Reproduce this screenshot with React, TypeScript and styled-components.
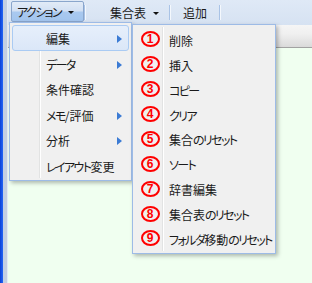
import React from "react";
import styled, { createGlobalStyle } from "styled-components";

const GlobalStyle = createGlobalStyle`
  html, body {
    margin: 0;
    padding: 0;
    background: #f0fff0;
  }
  body {
    font-family: "Noto Sans CJK JP", "Noto Sans", sans-serif;
    font-size: 12px;
    color: #1a1a1a;
  }
`;

const Frame = styled.div`
  position: relative;
  width: 312px;
  height: 283px;
  display: flex;
  overflow: hidden;
  font-feature-settings: "palt";
`;

const BlueEdge = styled.div`
  width: 3px;
  background: linear-gradient(to right, #0a40d6, #2466f6);
`;

const SideStrip = styled.div`
  width: 4px;
  background: #c3cfe2;
  border-right: 1px solid #e4ebf5;
`;

const Main = styled.div`
  flex: 1;
  display: flex;
  flex-direction: column;
`;

const Toolbar = styled.div`
  height: 25px;
  display: flex;
  align-items: center;
  padding-left: 3px;
  background: linear-gradient(#dfe9f6, #d6e2f2);
`;

const ToolButton = styled.div<{ $pressed?: boolean; $pad: string }>`
  height: 21px;
  box-sizing: border-box;
  display: flex;
  align-items: center;
  padding: ${(p) => p.$pad};
  border-radius: 2px;
  border: 1px solid ${(p) => (p.$pressed ? "#8aa6cc" : "transparent")};
  background: ${(p) =>
    p.$pressed
      ? "linear-gradient(#e2ebf7 0%, #d2e0f3 48%, #a9c9ef 52%, #a3c5ee 100%)"
      : "transparent"};
  margin-top: ${(p) => (p.$pressed ? "-2px" : "0")};
  line-height: 1;
  white-space: nowrap;
`;

const Caret = styled.span`
  width: 0;
  height: 0;
  margin-left: 7px;
  margin-top: 1px;
  border-left: 3px solid transparent;
  border-right: 3px solid transparent;
  border-top: 3px solid #111;
`;

const Sep = styled.div`
  width: 1px;
  height: 15px;
  background: #a9c3e6;
  border-right: 1px solid #f4f8fd;
`;

const HeaderBand = styled.div`
  height: 22px;
  background: linear-gradient(#f5f5f5, #f0f0f0 40%, #dadada);
  border-bottom: 1px solid #a2a2a2;
`;

const Content = styled.div`
  flex: 1;
  background: #f0fff0;
`;

const Menu = styled.div<{ $left: number; $top: number; $width: number }>`
  position: absolute;
  left: ${(p) => p.$left}px;
  top: ${(p) => p.$top}px;
  width: ${(p) => p.$width}px;
  box-sizing: border-box;
  padding: 2px;
  background: #f0f0f0;
  border: 1px solid #9dbbe6;
  box-shadow: 2px 2px 4px rgba(0, 0, 0, 0.28);
  display: flex;
  flex-direction: column;
`;

const Gutter = styled.div`
  position: absolute;
  left: 29px;
  top: 2px;
  bottom: 2px;
  width: 1px;
  background: #e2e3e3;
  border-right: 1px solid #ffffff;
`;

const Item = styled.div<{ $h: number; $active?: boolean }>`
  position: relative;
  height: ${(p) => p.$h}px;
  box-sizing: border-box;
  display: flex;
  align-items: center;
  padding-top: 3px;
  border-radius: 3px;
  border: 1px solid ${(p) => (p.$active ? "#aacbf3" : "transparent")};
  background: ${(p) =>
    p.$active ? "linear-gradient(#e6effb, #dbe7f8)" : "transparent"};
  white-space: nowrap;
`;

const IconCell = styled.div`
  width: 27px;
  flex-shrink: 0;
  display: flex;
  justify-content: center;
  align-items: center;
`;

const Label = styled.span`
  flex: 1;
  padding-left: 6px;
  line-height: 1;
`;

const Kana = styled.span`
  letter-spacing: -1.6px;
`;

const Arrow = styled.span`
  width: 0;
  height: 0;
  margin-right: 6px;
  border-top: 4px solid transparent;
  border-bottom: 4px solid transparent;
  border-left: 5px solid #3b7bd4;
`;

// red ring with the step number, as in the circled-digit glyphs
const Circled = styled.span`
  width: 19px;
  height: 16px;
  flex-shrink: 0;
  box-sizing: border-box;
  margin-top: -3px;
  margin-left: 1px;
  border: 2px solid #ff0000;
  border-radius: 50%;
  display: flex;
  align-items: center;
  justify-content: center;
  color: #ff0000;
  font-family: "Liberation Sans", Arial, sans-serif;
  font-weight: 700;
  font-size: 12px;
  line-height: 1;
`;

// MS UI Gothic draws kana narrower than kanji; tighten kana runs
const Jp = ({ text }: { text: string }) => (
  <>
    {text.split(/([\u3040-\u30ff]+)/).map((part, i) =>
      /^[\u3040-\u30ff]+$/.test(part) ? <Kana key={i}>{part}</Kana> : part
    )}
  </>
);

type MainItem = { label: string; sub?: boolean; active?: boolean };

const mainItems: MainItem[] = [
  { label: "編集", sub: true, active: true },
  { label: "データ", sub: true },
  { label: "条件確認" },
  { label: "メモ/評価", sub: true },
  { label: "分析", sub: true },
  { label: "レイアウト変更" },
];

const subItems = [
  "削除",
  "挿入",
  "コピー",
  "クリア",
  "集合のリセット",
  "ソート",
  "辞書編集",
  "集合表のリセット",
  "フォルダ移動のリセット",
];

export default function App() {
  return (
    <>
      <GlobalStyle />
      <Frame>
        <BlueEdge />
        <SideStrip />
        <Main>
          <Toolbar>
            <ToolButton $pressed $pad="0 9px 0 5px">
              <Jp text="アクション" />
              <Caret />
            </ToolButton>
            <Sep />
            <ToolButton $pad="0 9px 0 23px">
              集合表
              <Caret />
            </ToolButton>
            <Sep />
            <ToolButton $pad="0 11px 0 11px">追加</ToolButton>
            <Sep />
          </Toolbar>
          <HeaderBand />
          <Content />
        </Main>

        <Menu $left={9} $top={22} $width={123}>
          <Gutter />
          {mainItems.map((item) => (
            <Item key={item.label} $h={25.5} $active={item.active}>
              <IconCell />
              <Label>
                <Jp text={item.label} />
              </Label>
              {item.sub ? <Arrow /> : null}
            </Item>
          ))}
        </Menu>

        <Menu $left={132} $top={24} $width={144}>
          <Gutter />
          {subItems.map((label, i) => (
            <Item key={label} $h={24.875}>
              <IconCell>
                <Circled>{i + 1}</Circled>
              </IconCell>
              <Label>
                <Jp text={label} />
              </Label>
            </Item>
          ))}
        </Menu>
      </Frame>
    </>
  );
}
